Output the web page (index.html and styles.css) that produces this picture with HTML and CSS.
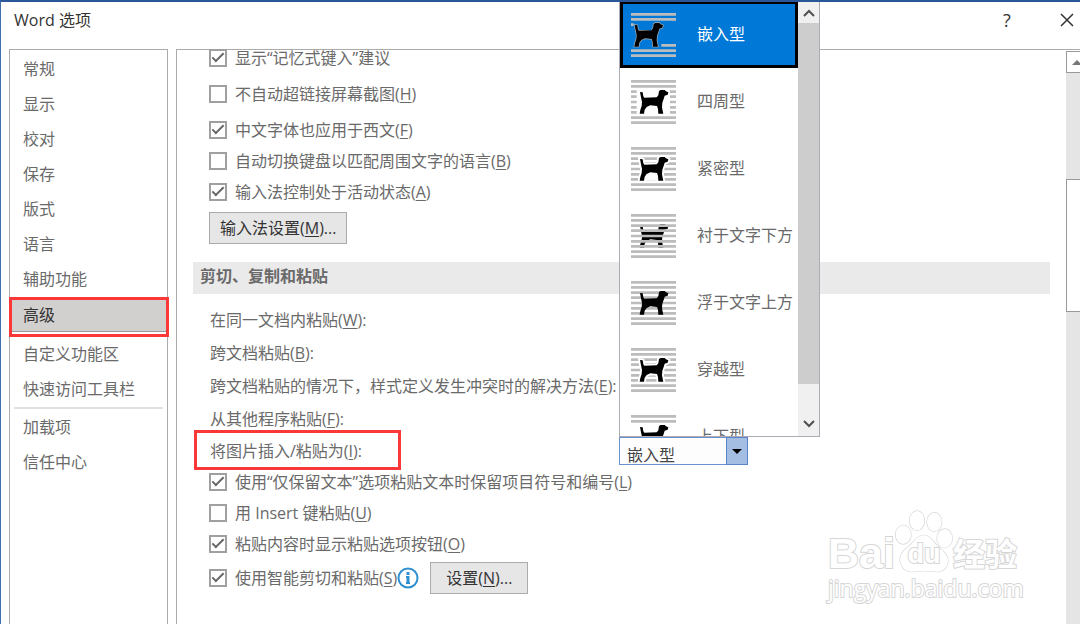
FILE: index.html
```
<!DOCTYPE html>
<html lang="zh-CN">
<head>
    <meta charset="UTF-8">
    <title>Word 选项</title>
    <link rel="stylesheet" href="styles.css">
</head>
<body>
    <!-- Shared shapes for the wrapping icons -->
    <svg class="defs" width="0" height="0" aria-hidden="true">
        <defs>
            <path id="dog" d="M27 36 35 37 37 49 40 53 77 52 82 46 84 33 89 30H101L105 34 112 37 110 44 101 47 98 57 94 68 93 82 95 92 97 101H82L81 87 78 78 58 76 47 81 41 89 39 101H26L28 90 32 78 33 66 30 52Z"/>
            <path id="lines-outer" d="M0 4H135M0 19H135M0 113H135M0 128H135"/>
            <path id="lines-inner" d="M0 35H135M0 50H135M0 66H135M0 82H135M0 97H135"/>
        </defs>
    </svg>

    <div class="dialog">
        <header class="title-bar">
            <h1>Word 选项</h1>
            <button class="title-btn" aria-label="帮助">?</button>
            <button class="title-btn" aria-label="关闭">
                <svg width="14" height="14" viewBox="0 0 14 14" fill="none" stroke="currentColor" stroke-width="1.5">
                    <path d="M1 1 13 13M13 1 1 13"/>
                </svg>
            </button>
        </header>

        <div class="dialog-body">
            <nav class="sidebar">
                <a href="#" class="nav-item">常规</a>
                <a href="#" class="nav-item">显示</a>
                <a href="#" class="nav-item">校对</a>
                <a href="#" class="nav-item">保存</a>
                <a href="#" class="nav-item">版式</a>
                <a href="#" class="nav-item">语言</a>
                <a href="#" class="nav-item">辅助功能</a>
                <a href="#" class="nav-item active">高级</a>
                <a href="#" class="nav-item">自定义功能区</a>
                <a href="#" class="nav-item">快速访问工具栏</a>
                <hr>
                <a href="#" class="nav-item">加载项</a>
                <a href="#" class="nav-item">信任中心</a>
            </nav>

            <main class="panel">
                <div class="settings">
                    <label class="check-row spaced"><input type="checkbox" checked><span>显示“记忆式键入”建议</span></label>
                    <label class="check-row spaced"><input type="checkbox"><span>不自动超链接屏幕截图(<u>H</u>)</span></label>
                    <label class="check-row"><input type="checkbox" checked><span>中文字体也应用于西文(<u>F</u>)</span></label>
                    <label class="check-row"><input type="checkbox"><span>自动切换键盘以匹配周围文字的语言(<u>B</u>)</span></label>
                    <label class="check-row"><input type="checkbox" checked><span>输入法控制处于活动状态(<u>A</u>)</span></label>
                    <button class="btn ime-btn">输入法设置(<u>M</u>)...</button>

                    <h2>剪切、复制和粘贴</h2>

                    <div class="paste-row">在同一文档内粘贴(<u>W</u>):</div>
                    <div class="paste-row">跨文档粘贴(<u>B</u>):</div>
                    <div class="paste-row">跨文档粘贴的情况下，样式定义发生冲突时的解决方法(<u>E</u>):</div>
                    <div class="paste-row">从其他程序粘贴(<u>F</u>):</div>
                    <div class="paste-row marked">
                        <label for="insert-as">将图片插入/粘贴为(<u>I</u>):</label>
                        <div class="combo">
                            <select id="insert-as">
                                <option>嵌入型</option>
                                <option>四周型</option>
                                <option>紧密型</option>
                                <option>衬于文字下方</option>
                                <option>浮于文字上方</option>
                                <option>穿越型</option>
                                <option>上下型</option>
                            </select>
                            <span class="combo-arrow">
                                <svg width="10" height="5" viewBox="0 0 10 5"><path d="M0 0H10L5 5Z"/></svg>
                            </span>

                            <div class="dropdown">
                                <div class="options" role="listbox" aria-label="图片插入方式">
                                    <button class="option selected" role="option" aria-selected="true">
                                        <svg class="wrap-icon" viewBox="0 0 135 132">
                                            <use href="#lines-outer"/>
                                            <path d="M0 35H8M91 97H135"/>
                                            <use href="#dog" x="-16" class="dog glow"/>
                                        </svg>
                                        嵌入型
                                    </button>
                                    <button class="option" role="option">
                                        <svg class="wrap-icon" viewBox="0 0 135 132">
                                            <use href="#lines-outer"/>
                                            <path d="M0 35H17M0 50H17M0 66H17M0 82H17M0 97H17M117 35H135M117 50H135M117 66H135M117 82H135M117 97H135"/>
                                            <use href="#dog" class="dog"/>
                                        </svg>
                                        四周型
                                    </button>
                                    <button class="option" role="option">
                                        <svg class="wrap-icon" viewBox="0 0 135 132">
                                            <use href="#lines-outer"/>
                                            <use href="#lines-inner"/>
                                            <path class="blank" d="M36 76H84V101H36Z"/>
                                            <use href="#dog" class="dog halo"/>
                                        </svg>
                                        紧密型
                                    </button>
                                    <button class="option" role="option">
                                        <svg class="wrap-icon" viewBox="0 0 135 132">
                                            <use href="#dog" class="dog"/>
                                            <use href="#lines-outer"/>
                                            <use href="#lines-inner"/>
                                        </svg>
                                        衬于文字下方
                                    </button>
                                    <button class="option" role="option">
                                        <svg class="wrap-icon" viewBox="0 0 135 132">
                                            <use href="#lines-outer"/>
                                            <use href="#lines-inner"/>
                                            <use href="#dog" class="dog"/>
                                        </svg>
                                        浮于文字上方
                                    </button>
                                    <button class="option" role="option">
                                        <svg class="wrap-icon" viewBox="0 0 135 132">
                                            <use href="#lines-outer"/>
                                            <use href="#lines-inner"/>
                                            <use href="#dog" class="dog halo"/>
                                        </svg>
                                        穿越型
                                    </button>
                                    <button class="option" role="option">
                                        <svg class="wrap-icon" viewBox="0 0 135 132">
                                            <use href="#lines-outer"/>
                                            <use href="#dog" class="dog"/>
                                        </svg>
                                        上下型
                                    </button>
                                </div>
                                <div class="list-scroll">
                                    <svg width="12" height="8" viewBox="0 0 12 8"><path d="M1 7 6 2 11 7"/></svg>
                                    <div class="list-thumb"></div>
                                    <svg width="12" height="8" viewBox="0 0 12 8"><path d="M1 1 6 6 11 1"/></svg>
                                </div>
                            </div>
                        </div>
                    </div>

                    <label class="check-row"><input type="checkbox" checked><span>使用“仅保留文本”选项粘贴文本时保留项目符号和编号(<u>L</u>)</span></label>
                    <label class="check-row"><input type="checkbox"><span>用 Insert 键粘贴(<u>U</u>)</span></label>
                    <label class="check-row"><input type="checkbox" checked><span>粘贴内容时显示粘贴选项按钮(<u>O</u>)</span></label>
                    <div class="smart-row">
                        <label class="check-row"><input type="checkbox" checked><span>使用智能剪切和粘贴(<u>S</u>)</span></label>
                        <svg class="info" width="22" height="22" viewBox="0 0 22 22">
                            <circle cx="11" cy="11" r="9.5"/>
                            <path class="info-i" d="M11 5V8M11 9V17"/>
                            <path class="info-serif" d="M9 10H11M9 16H13"/>
                        </svg>
                        <button class="btn">设置(<u>N</u>)...</button>
                    </div>
                </div>

                <div class="scrollbar">
                    <div class="scroll-up">
                        <svg width="10" height="5" viewBox="0 0 10 5"><path d="M0 5H10L5 0Z"/></svg>
                    </div>
                    <div class="scroll-thumb"></div>
                </div>
            </main>
        </div>

        <div class="watermark">
            <div class="brand">
                <span class="brand-bai">Bai</span>
                <span class="paw">
                    <svg width="58" height="64" viewBox="0 0 174 192">
                        <ellipse cx="25" cy="74" rx="23" ry="28"/>
                        <ellipse cx="66" cy="32" rx="22" ry="29"/>
                        <ellipse cx="118" cy="36" rx="22" ry="28"/>
                        <ellipse cx="149" cy="85" rx="23" ry="28"/>
                        <path d="M87 76C65 76 56 98 38 112C14 130 10 152 22 170C38 194 65 182 87 182C110 182 140 194 154 170C168 145 150 128 132 112C114 98 108 76 87 76Z"/>
                    </svg>
                    <span class="brand-du">du</span>
                </span>
                <span class="brand-cn">经验</span>
            </div>
            <div class="brand-url">jingyan.baidu.com</div>
        </div>
    </div>
</body>
</html>
```
FILE: styles.css
```
:root {
    --text: #6a6a6a;
    --text-dark: #333333;
    --border: #ababab;
    --mark: #fb3838;
    --blue: #0078d7;
    --accent: #2b579a;
}

*,
*::before {
    margin: 0;
    padding: 0;
    box-sizing: border-box;
}

body {
    background-color: #fff;
    color: var(--text);
    font-family: "Open Sans", "Noto Sans CJK SC", sans-serif;
    font-size: 16px;
    line-height: 20px;
    overflow: hidden;
}

button,
select {
    font: inherit;
    color: inherit;
}

u {
    text-underline-offset: 2px;
}

.defs {
    position: absolute;
}

.dialog {
    height: 100vh;
    display: flex;
    flex-direction: column;
    border-top: 2px solid var(--accent);
    border-left: 1px solid #416fac;
    overflow: hidden;
    position: relative;
}

/* ========== Title bar ========== */
.title-bar {
    height: 47px;
    display: flex;
    align-items: flex-start;
    padding: 8px 6px 0 13px;
    color: var(--text-dark);
}

.title-bar h1 {
    flex: 1;
    font-size: 16px;
    font-weight: 400;
}

.title-btn {
    width: 14px;
    height: 20px;
    margin-left: 46px;
    border: none;
    background: none;
    font-size: 18px;
    display: flex;
    align-items: center;
    justify-content: center;
}

.dialog-body {
    flex: 1;
    min-height: 0;
    display: flex;
    gap: 8px;
    padding-left: 8px;
}

/* ========== Sidebar ========== */
.sidebar {
    width: 159px;
    border: 1px solid var(--border);
    border-bottom: none;
    padding-top: 2px;
}

.nav-item {
    display: block;
    height: 35px;
    line-height: 35px;
    padding-left: 13px;
    color: var(--text);
    text-decoration: none;
}

.nav-item.active {
    height: 40px;
    margin: 0 -2px 0 -1px;
    padding-left: 11px;
    line-height: 30px;
    border: 3px solid var(--mark);
    background-color: #d2d0ce;
    box-shadow: inset 0 -2px #fff, inset 0 -3px #999;
    color: var(--text-dark);
}

.sidebar hr {
    height: 2px;
    border: none;
    background-color: #e1e1e1;
    margin: 0 4px 1px;
}

/* ========== Settings ========== */
.panel {
    flex: 1;
    display: flex;
    justify-content: space-between;
    border-top: 1px solid var(--border);
    border-left: 1px solid var(--border);
}

.settings {
    flex: 1;
    margin: -8px 16px 0;
}

.check-row {
    height: 31px;
    display: flex;
    align-items: center;
    gap: 8px;
    padding-left: 16px;
}

.check-row.spaced {
    margin-bottom: 5px;
}

.check-row input {
    appearance: none;
    width: 18px;
    height: 18px;
    border: 2px solid #a0a0a0;
    display: flex;
    align-items: center;
    justify-content: center;
}

.check-row input:checked::before {
    content: "";
    width: 12px;
    height: 6px;
    border-left: 2px solid #666;
    border-bottom: 2px solid #666;
    transform: translateY(-2px) rotate(-45deg);
}

.btn {
    height: 32px;
    padding: 0 15px;
    border: 1px solid var(--border);
    background-color: #e6e6e6;
    color: var(--text-dark);
}

.ime-btn {
    display: block;
    margin: 5px 0 0 16px;
    padding: 0 10px;
}

.settings h2 {
    height: 32px;
    margin: 18px 0 10px;
    padding-left: 7px;
    background-color: #eaeaea;
    font-size: 16px;
    line-height: 28px;
}

.paste-row {
    height: 33px;
    line-height: 33px;
    padding-left: 17px;
    white-space: nowrap;
}

.paste-row.marked {
    height: 30px;
    display: flex;
    align-items: center;
    position: relative;
}

.paste-row.marked::before {
    content: "";
    position: absolute;
    left: 1px;
    top: -6px;
    width: 207px;
    height: 40px;
    border: 3px solid var(--mark);
}

.paste-row label {
    width: 409px;
}

.smart-row {
    display: flex;
    align-items: center;
    margin-top: 3px;
}

.smart-row .btn {
    margin-left: 11px;
}

.info {
    fill: none;
    stroke: #2e90d1;
    stroke-width: 2;
}

.info-i {
    stroke-width: 3;
}

/* ========== Combo and open list ========== */
.combo {
    width: 129px;
    height: 28px;
    position: relative;
}

.combo select {
    appearance: none;
    width: 100%;
    height: 100%;
    padding: 0 7px;
    border: 1px solid #6a90cf;
    border-radius: 0;
    background-color: #fdfdfd;
    color: #444;
    font-family: "Noto Sans CJK SC", sans-serif;
}

.combo-arrow {
    position: absolute;
    top: 0;
    right: 0;
    width: 22px;
    height: 28px;
    border: 1px solid #5b85c8;
    background-color: #a3bde3;
    display: flex;
    align-items: center;
    justify-content: center;
    pointer-events: none;
}

.dropdown {
    position: absolute;
    left: 0;
    bottom: 100%;
    z-index: 2;
    height: 437px;
    display: flex;
    border: 1px solid #acacb4;
    background-color: #fff;
}

.options {
    width: 178px;
    overflow: hidden;
}

.option {
    width: 100%;
    height: 67px;
    display: flex;
    align-items: center;
    gap: 21px;
    padding-left: 11px;
    border: none;
    background: none;
    white-space: nowrap;
}

.option.selected {
    border: 3px solid #000;
    padding-left: 8px;
    background-color: var(--blue);
    color: #fff;
}

.wrap-icon {
    width: 45px;
    height: 44px;
    flex: none;
    fill: none;
    stroke: #bcbcbc;
    stroke-width: 8;
}

.wrap-icon .dog {
    fill: #000;
    stroke: none;
}

.wrap-icon .glow {
    stroke: #b0b0b0;
    stroke-width: 4;
    paint-order: stroke;
}

.wrap-icon .halo {
    stroke: #fff;
    stroke-width: 11;
    paint-order: stroke;
}

.wrap-icon .blank {
    fill: #fff;
    stroke: none;
}

.list-scroll {
    width: 21px;
    display: flex;
    flex-direction: column;
    align-items: center;
    padding: 8px 0;
    background-color: #f0f0f0;
    fill: none;
    stroke: #505050;
    stroke-width: 2;
}

.list-thumb {
    width: 100%;
    height: 361px;
    margin: 6px 0 auto;
    background-color: #cdcdcd;
}

/* ========== Panel scrollbar ========== */
.scrollbar {
    width: 14px;
    margin-top: 1px;
    background-color: #e5e5e5;
    overflow: hidden;
}

.scroll-up,
.scroll-thumb {
    width: 22px;
    border: 1px solid #999;
    background-color: #fff;
}

.scroll-up {
    height: 22px;
    display: flex;
    align-items: center;
    justify-content: center;
    fill: #777;
}

.scroll-thumb {
    height: 133px;
    margin-top: 106px;
}

/* ========== Watermark ========== */
.watermark {
    position: absolute;
    right: 58px;
    bottom: 22px;
    width: 194px;
    color: #fff;
    white-space: nowrap;
    -webkit-text-stroke: 2px #d6d6d6;
    paint-order: stroke;
}

.brand {
    display: flex;
    align-items: flex-end;
    font-weight: 700;
}

.brand-bai {
    font-family: "Liberation Sans", sans-serif;
    font-size: 43px;
    line-height: 42px;
}

.brand-cn {
    font-family: "Noto Sans CJK SC", sans-serif;
    font-size: 32px;
    line-height: 44px;
}

.paw {
    display: flex;
    position: relative;
}

.paw svg {
    fill: #fff;
    stroke: #d6d6d6;
    stroke-width: 4;
}

.brand-du {
    position: absolute;
    inset: auto 0 6px;
    text-align: center;
    font-family: "Liberation Sans", sans-serif;
    font-size: 27px;
    line-height: 28px;
}

.brand-url {
    font-size: 23px;
    line-height: 28px;
}
```
